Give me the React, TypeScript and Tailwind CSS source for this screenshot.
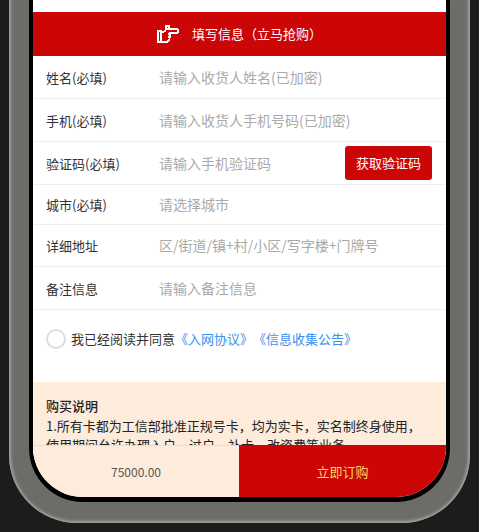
const rows = [
  { label: "姓名(必填)", hint: "请输入收货人姓名(已加密)", h: "h-[43px]" },
  { label: "手机(必填)", hint: "请输入收货人手机号码(已加密)", h: "h-[43px]" },
  { label: "验证码(必填)", hint: "请输入手机验证码", h: "h-[43px]", code: true },
  { label: "城市(必填)", hint: "请选择城市", h: "h-[40px]" },
  { label: "详细地址", hint: "区/街道/镇+村/小区/写字楼+门牌号", h: "h-[42px]" },
  { label: "备注信息", hint: "请输入备注信息", h: "h-[43px]" },
];

function PointIcon() {
  return (
    <svg width="23" height="18" viewBox="0 0 23 18" fill="none" stroke="#fff" strokeWidth="1.5" shapeRendering="crispEdges" className="mr-[12px]">
      <path d="M1 6h3v11H1z" />
      <path d="M4 7h2l2-1 1-2V1h3v2l-1 1h9l1 1v2l-1 1h-7v4l-1 3-2 2H4" />
      <path d="M12 8v2M11 12h2" />
    </svg>
  );
}

export default function App() {
  return (
    <div className="h-[532px] w-[479px] overflow-hidden bg-[#1c1c1c] font-['Noto_Sans_CJK_SC','Liberation_Sans',sans-serif]">
      <div className="mx-[9px] h-[523px] rounded-b-[68px] bg-[#6c6d68] px-[20px] pb-[21px] shadow-[inset_4px_0_3px_-2px_#a3a39e,inset_-4px_0_3px_-2px_#a3a39e,inset_0_-4px_3px_-2px_#a3a39e]">
        <div className="h-full rounded-b-[54px] bg-black px-[4px] pb-[5px]">
          <div className="relative h-full overflow-hidden rounded-b-[50px] bg-white">
            <div className="h-[12px]" />
            <div className="flex h-[44px] items-center justify-center bg-[#cc0606] text-[13px] text-white">
              <PointIcon />
              <span>填写信息（立马抢购）</span>
            </div>
            {rows.map((r) => (
              <div key={r.label} className={`flex items-center border-b border-[#eeeeee] pl-[13px] pr-[14px] ${r.h}`}>
                <span className="w-[113px] pt-px text-[13px] text-[#333333]">{r.label}</span>
                <span className="flex-1 text-[14px] text-[#aaaaaa]">{r.hint}</span>
                {r.code && (
                  <span className="flex h-[34px] w-[87px] items-center justify-center rounded-[3px] bg-[#cc0606] text-[13px] text-white">获取验证码</span>
                )}
              </div>
            ))}
            <div className="flex h-[58px] items-center pl-[13px] text-[13px] text-[#333333] [text-spacing-trim:space-all]">
              <span className="mr-[5px] h-[20px] w-[20px] rounded-full border-2 border-[#dddddd]" />
              <span>我已经阅读并同意</span>
              <span className="text-[#3b8ff0]">《入网协议》《信息收集公告》</span>
            </div>
            <div className="mt-[14px] bg-[#fdecdc] px-[13px] pt-[14px] text-[13px] leading-[19.5px] text-[#222222]">
              <div className="font-medium">购买说明</div>
              <div>1.所有卡都为工信部批准正规号卡，均为实卡，实名制终身使用，使用期间允许办理入户、过户、补卡、改资费等业务</div>
            </div>
            <div className="absolute inset-x-0 bottom-0 flex h-[52px]">
              <div className="flex w-[206px] items-center justify-center border-t border-[#e6ddd3] bg-[#fdecdc] pt-px text-[12px] text-[#555555]">75000.00</div>
              <div className="flex flex-1 items-center justify-center bg-[#cc0606] pt-px text-[13px] text-[#ffd45e]">立即订购</div>
            </div>
          </div>
        </div>
      </div>
    </div>
  );
}
